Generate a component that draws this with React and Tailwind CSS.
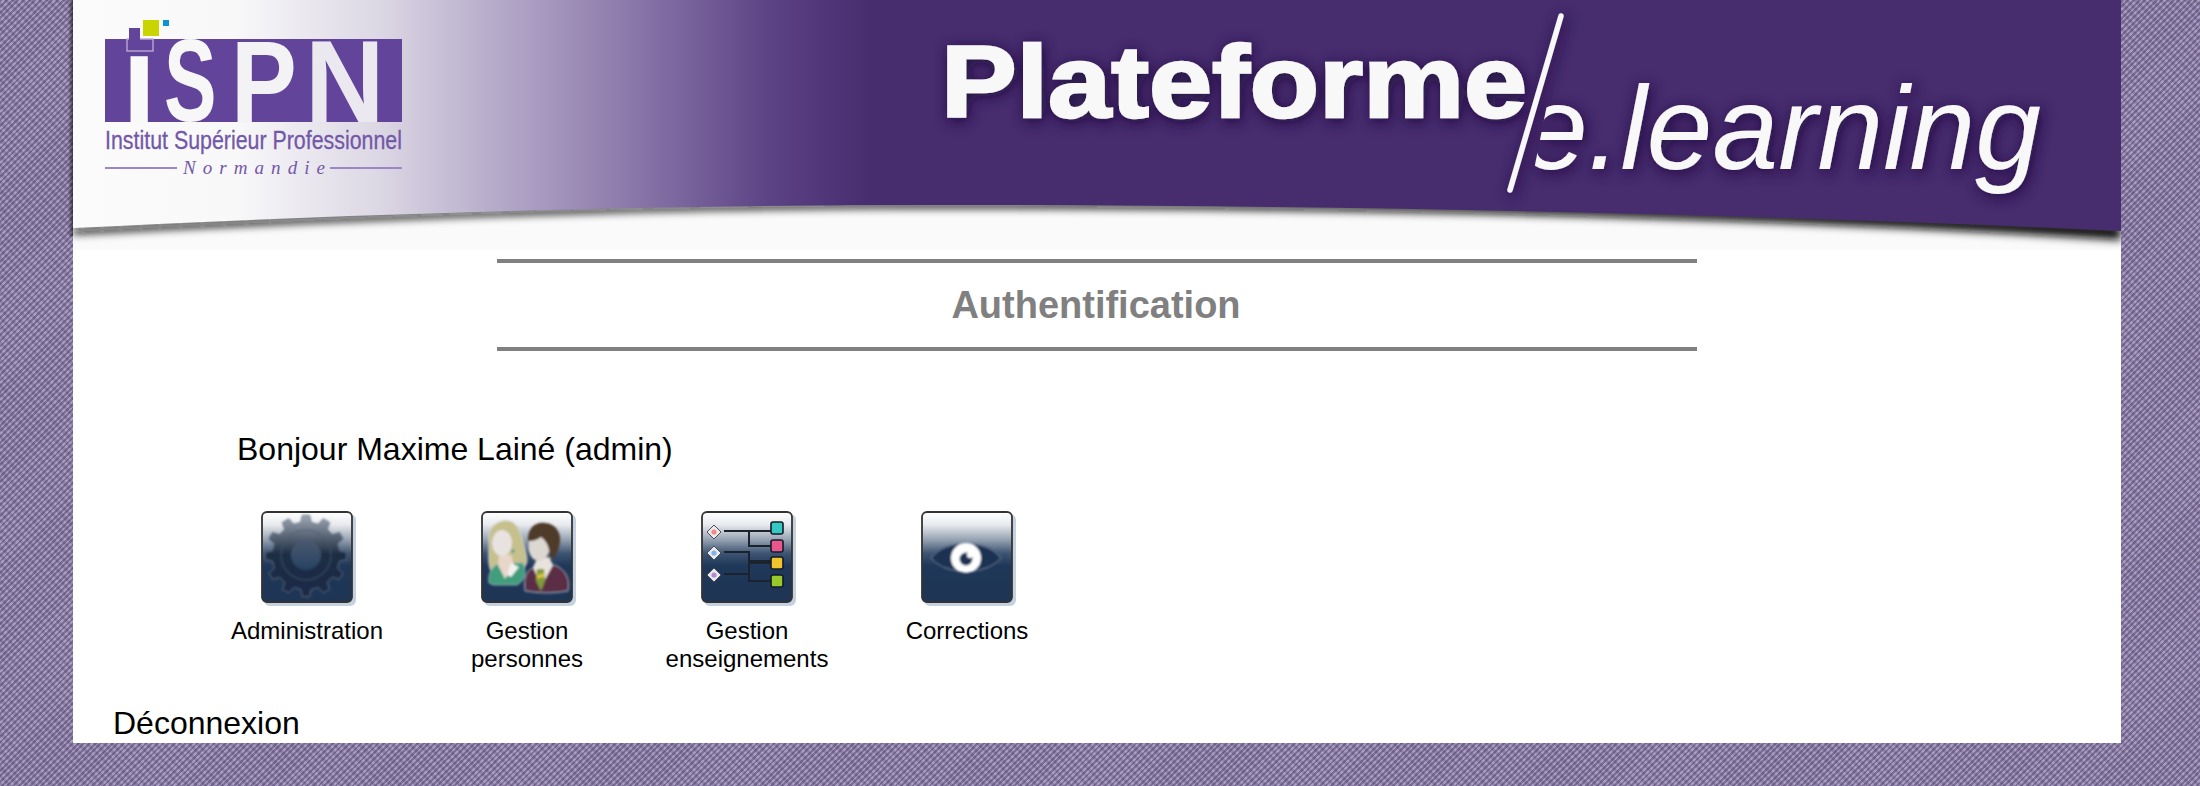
import React from 'react';

const sans = '"Liberation Sans", Arial, sans-serif';

// cog outline, 12 teeth
const gearPath = (cx, cy, outer, inner, teeth) => {
  const pts = [];
  for (let i = 0; i < teeth; i++) {
    const a = (i / teeth) * Math.PI * 2 - Math.PI / 2;
    const w = (Math.PI * 2) / teeth;
    [[inner, -0.3], [outer, -0.17], [outer, 0.17], [inner, 0.3]].forEach(([r, k]) => {
      pts.push(`${(cx + r * Math.cos(a + k * w)).toFixed(1)},${(cy + r * Math.sin(a + k * w)).toFixed(1)}`);
    });
  }
  return `M${pts.join('L')}Z`;
};

function IconFrame({ id, blur = 0.6, children }) {
  return (
    <svg width="96" height="96" viewBox="0 0 96 96" className="block">
      <defs>
        <linearGradient id={`${id}-bg`} x1="0" y1="0" x2="0" y2="1">
          <stop offset="0" stopColor="#ffffff" />
          <stop offset="0.14" stopColor="#e8eaee" />
          <stop offset="0.3" stopColor="#9aa6b5" />
          <stop offset="0.46" stopColor="#3d5472" />
          <stop offset="0.6" stopColor="#1f3758" />
          <stop offset="1" stopColor="#1e3555" />
        </linearGradient>
        <filter id={`${id}-soft`} x="-10%" y="-10%" width="120%" height="120%">
          <feGaussianBlur stdDeviation={blur} />
        </filter>
      </defs>
      <rect x="3" y="3" width="92" height="92" rx="6" fill="#a9bdd4" opacity="0.7" />
      <rect x="1" y="1" width="90" height="90" rx="5" fill={`url(#${id}-bg)`} stroke="#333333" strokeWidth="1.8" />
      <g filter={`url(#${id}-soft)`}>{children}</g>
    </svg>
  );
}

function GearIcon() {
  return (
    <IconFrame id="gear" blur={0.8}>
      <defs>
        <linearGradient id="gear-fill" x1="0" y1="0" x2="0" y2="1">
          <stop offset="0" stopColor="#a0a8b3" />
          <stop offset="0.48" stopColor="#1e2d43" />
          <stop offset="1" stopColor="#1a2c47" />
        </linearGradient>
        <linearGradient id="gear-core" x1="0" y1="0" x2="0" y2="1">
          <stop offset="0" stopColor="#4a5a70" />
          <stop offset="1" stopColor="#264263" />
        </linearGradient>
      </defs>
      <path d={gearPath(45, 45, 41, 34, 12)} fill="url(#gear-fill)" stroke="#5d6e85" strokeWidth="0.8" />
      <circle cx="45" cy="44" r="25" fill="none" stroke="#46586f" strokeWidth="0.8" />
      <circle cx="45" cy="44" r="15" fill="url(#gear-core)" />
    </IconFrame>
  );
}

function PeopleIcon() {
  return (
    <IconFrame id="people" blur={0.9}>
      {/* woman */}
      <path d="M8 30 C6 14 20 8 28 10 C38 12 41 26 44 38 C46 46 48 52 42 58 L30 66 L12 62 C6 58 8 44 8 30Z" fill="#c6c08c" stroke="#d5dbe2" strokeWidth="0.8" />
      <path d="M8 72 C6 60 14 52 22 52 L42 52 C46 60 44 70 36 74 L12 74Z" fill="#3f9e7c" stroke="#9fb1c4" strokeWidth="0.8" />
      <path d="M18 44 L30 44 L33 54 L24 68 L17 54Z" fill="#e9d6cb" />
      <path d="M30 52 L38 56 L30 66 L26 64Z" fill="#f2f2ee" />
      <ellipse cx="21" cy="32" rx="10" ry="13" fill="#e8e3e1" />
      <circle cx="32" cy="40" r="1.6" fill="#2f9a8f" />
      {/* man */}
      <path d="M44 80 C42 66 46 58 54 56 L74 54 C84 58 90 68 87 80 Q66 84 44 80Z" fill="#5b2d44" stroke="#9fb1c4" strokeWidth="0.9" />
      <path d="M52 56 L60 76 L72 54 L68 46 L56 48Z" fill="#e9e3dd" />
      <path d="M56 58 L63 58 L64 70 L60 80 L55 70Z" fill="#7f9b3a" />
      <path d="M56 64 L63 62 L63 66 L56 68Z" fill="#d8c23a" />
      <ellipse cx="58" cy="36" rx="10.5" ry="14" fill="#ddd7d2" />
      <path d="M47 30 C46 16 56 10 64 12 C76 13 82 24 78 36 C76 44 73 48 69 48 C69 38 66 30 60 26 C55 30 50 30 47 30Z" fill="#4f3a2a" />
    </IconFrame>
  );
}

function TreeIcon() {
  const lines = 'M23 20H70M48 20V35H70M23 41H48V50H70M23 63H48M48 52V70H70M48 52H70';
  const boxes = [[17, '#36c9c6'], [35, '#e8578c'], [52, '#f0c22e'], [70, '#98c92b']];
  const diamonds = [[21, '#f08a8a'], [42, '#7fb0f0'], [64, '#b48ad8']];
  return (
    <IconFrame id="tree" blur={0.5}>
      <path d={lines} fill="none" stroke="#1a222e" strokeWidth="2" />
      {boxes.map(([y, c]) => (
        <rect key={y} x="70" y={y - 6} width="12" height="12" rx="2" fill={c} stroke="#141c28" strokeWidth="1.6" />
      ))}
      {diamonds.map(([y, c]) => (
        <g key={y}>
          <path d={`M13 ${y - 7}L20 ${y}L13 ${y + 7}L6 ${y}Z`} fill="#ece9e9" stroke="#4a4f58" strokeWidth="1" />
          <circle cx="13" cy={y} r="2.6" fill={c} />
        </g>
      ))}
    </IconFrame>
  );
}

function EyeIcon() {
  return (
    <IconFrame id="eye" blur={0.9}>
      <path d="M10 47 C24 28 66 28 80 47 C66 65 24 65 10 47Z" fill="#1c3252" stroke="#5a6f88" strokeWidth="1.2" />
      <circle cx="45" cy="47" r="15" fill="#ffffff" />
      <circle cx="45" cy="48" r="6.5" fill="#1c3252" />
      <circle cx="49" cy="44" r="3" fill="#ffffff" />
    </IconFrame>
  );
}

function Banner() {
  return (
    <svg width="2048" height="250" viewBox="0 0 2048 250" className="block overflow-visible">
      <defs>
        <linearGradient id="banner-fill" x1="0" y1="0" x2="2048" y2="0" gradientUnits="userSpaceOnUse">
          <stop offset="0" stopColor="#fbfbfb" />
          <stop offset="0.08" stopColor="#f8f8f9" />
          <stop offset="0.15" stopColor="#dcd7e4" />
          <stop offset="0.21" stopColor="#b3a8c8" />
          <stop offset="0.28" stopColor="#8672a6" />
          <stop offset="0.34" stopColor="#5c4385" />
          <stop offset="0.39" stopColor="#472c6e" />
          <stop offset="1" stopColor="#472c6e" />
        </linearGradient>
        <linearGradient id="edge-left" x1="0" y1="0" x2="1" y2="0">
          <stop offset="0" stopColor="#000000" stopOpacity="0" />
          <stop offset="1" stopColor="#000000" stopOpacity="0.55" />
        </linearGradient>
        <filter id="curve-shadow" x="-2%" y="-20%" width="104%" height="160%">
          <feGaussianBlur stdDeviation="4" />
        </filter>
        <filter id="title-shadow" x="-10%" y="-30%" width="120%" height="170%">
          <feDropShadow dx="2" dy="3" stdDeviation="7" floodColor="#1c0a3c" floodOpacity="0.95" />
        </filter>
        <clipPath id="banner-clip">
          <rect x="0" y="0" width="2048" height="250" />
        </clipPath>
        {/* the e is cut by the slash */}
        <clipPath id="slash-cut">
          <path d="M1495 0H2048V250H1445Z" />
        </clipPath>
      </defs>

      <rect x="-5" y="0" width="5" height="236" fill="url(#edge-left)" />
      <rect x="0" y="0" width="2048" height="250" fill="#fafafa" />
      <g clipPath="url(#banner-clip)">
        <path
          d="M0 234 C300 218 620 207 880 208 C1300 208 1700 218 2048 240 L2048 226 C1700 206 1300 202 880 202 C620 202 300 212 0 228Z"
          fill="#111111"
          filter="url(#curve-shadow)"
        />
      </g>
      <path
        d="M0 228 C260 215 560 205 860 205 C1300 205 1700 215 2048 231 L2048 0 L0 0Z"
        fill="url(#banner-fill)"
      />

      {/* logo */}
      <g>
        <rect x="32" y="39" width="297" height="83" fill="#62459a" />
        <text x="66" y="122" fontFamily={sans} fontWeight="700" fontSize="125" fill="#f9f9fa" textAnchor="middle">ı</text>
        <text x="0" y="0" transform="translate(91 121) scale(0.75 1.12)" fontFamily={sans} fontWeight="700" fontSize="105" fill="#f7f7f8">S</text>
        <text x="0" y="0" transform="translate(158 122) scale(0.85 1)" fontFamily={sans} fontWeight="700" fontSize="116" fill="#f3f2f5">P</text>
        <text x="0" y="0" transform="translate(232 122) scale(0.95 1)" fontFamily={sans} fontWeight="700" fontSize="116" fill="#ebe9ef">N</text>
        <rect x="54" y="39" width="26" height="12" fill="none" stroke="#b9a9d4" strokeWidth="1.4" />
        <rect x="56" y="28" width="11" height="22" fill="#62459a" />
        <rect x="70" y="20" width="16" height="16" fill="#cad400" />
        <rect x="90" y="20" width="6" height="6" fill="#0a94d6" />
        <text x="32" y="149" fontFamily={sans} fontSize="25" stroke="#7358a8" strokeWidth="0.3" fill="#7358a8" textLength="297" lengthAdjust="spacingAndGlyphs">Institut Supérieur Professionnel</text>
        <rect x="32" y="167" width="72" height="2" fill="#9c86c4" />
        <rect x="257" y="167" width="72" height="2" fill="#9c86c4" />
        <text x="110" y="174" fontFamily='"Liberation Serif", serif' fontStyle="italic" fontSize="19" fill="#7358a8" textLength="142">Normandie</text>
      </g>

      {/* title */}
      <g filter="url(#title-shadow)" fill="#f8f8f8">
        <text x="868" y="117" fontFamily={sans} fontWeight="700" fontSize="102" stroke="#f8f8f8" strokeWidth="2.5" textLength="586" lengthAdjust="spacingAndGlyphs">Plateforme</text>
        <g clipPath="url(#slash-cut)">
          <text x="1449" y="169" fontFamily={sans} fontStyle="italic" fontSize="118" textLength="519" lengthAdjust="spacingAndGlyphs">e.learning</text>
        </g>
        <path d="M1488 16 L1437 190" stroke="#f8f8f8" strokeWidth="5.5" strokeLinecap="round" fill="none" />
      </g>
    </svg>
  );
}

const apps = [
  { label: ['Administration'], icon: GearIcon },
  { label: ['Gestion', 'personnes'], icon: PeopleIcon },
  { label: ['Gestion', 'enseignements'], icon: TreeIcon },
  { label: ['Corrections'], icon: EyeIcon },
];

export default function App() {
  return (
    <div
      className="min-h-[786px] pb-[43px] bg-[repeating-linear-gradient(135deg,rgba(70,55,100,0.45)_0px,rgba(70,55,100,0.45)_2px,transparent_2px,transparent_4px),repeating-linear-gradient(45deg,#8f82a8_0px,#8f82a8_3px,#a99dbf_3px,#a99dbf_6px)]"
      style={{ fontFamily: sans }}
    >
      <div className="ml-[73px] w-[2048px] h-[743px] bg-white text-black">
        <Banner />

        <div className="mx-auto mt-[9px] w-[1200px] h-[92px] border-y-4 border-[#808080] flex items-center justify-center">
          <h1 className="text-[38px] font-bold text-[#808080] -ml-[2px]">Authentification</h1>
        </div>

        <p className="ml-[164px] mt-[80px] text-[32px] leading-[36px]">Bonjour Maxime Lainé (admin)</p>

        <div className="ml-[124px] mt-[44px] flex">
          {apps.map(({ label, icon: Icon }) => (
            <div key={label.join(' ')} className="w-[220px] flex flex-col items-center text-center">
              <div className="pl-[4px]"><Icon /></div>
              <div className="mt-[10px] text-[24px] leading-[28px]">
                {label.map((line) => <div key={line}>{line}</div>)}
              </div>
            </div>
          ))}
        </div>

        <p className="ml-[40px] mt-[32px] text-[32px] leading-[37px]">Déconnexion</p>
      </div>
    </div>
  );
}
